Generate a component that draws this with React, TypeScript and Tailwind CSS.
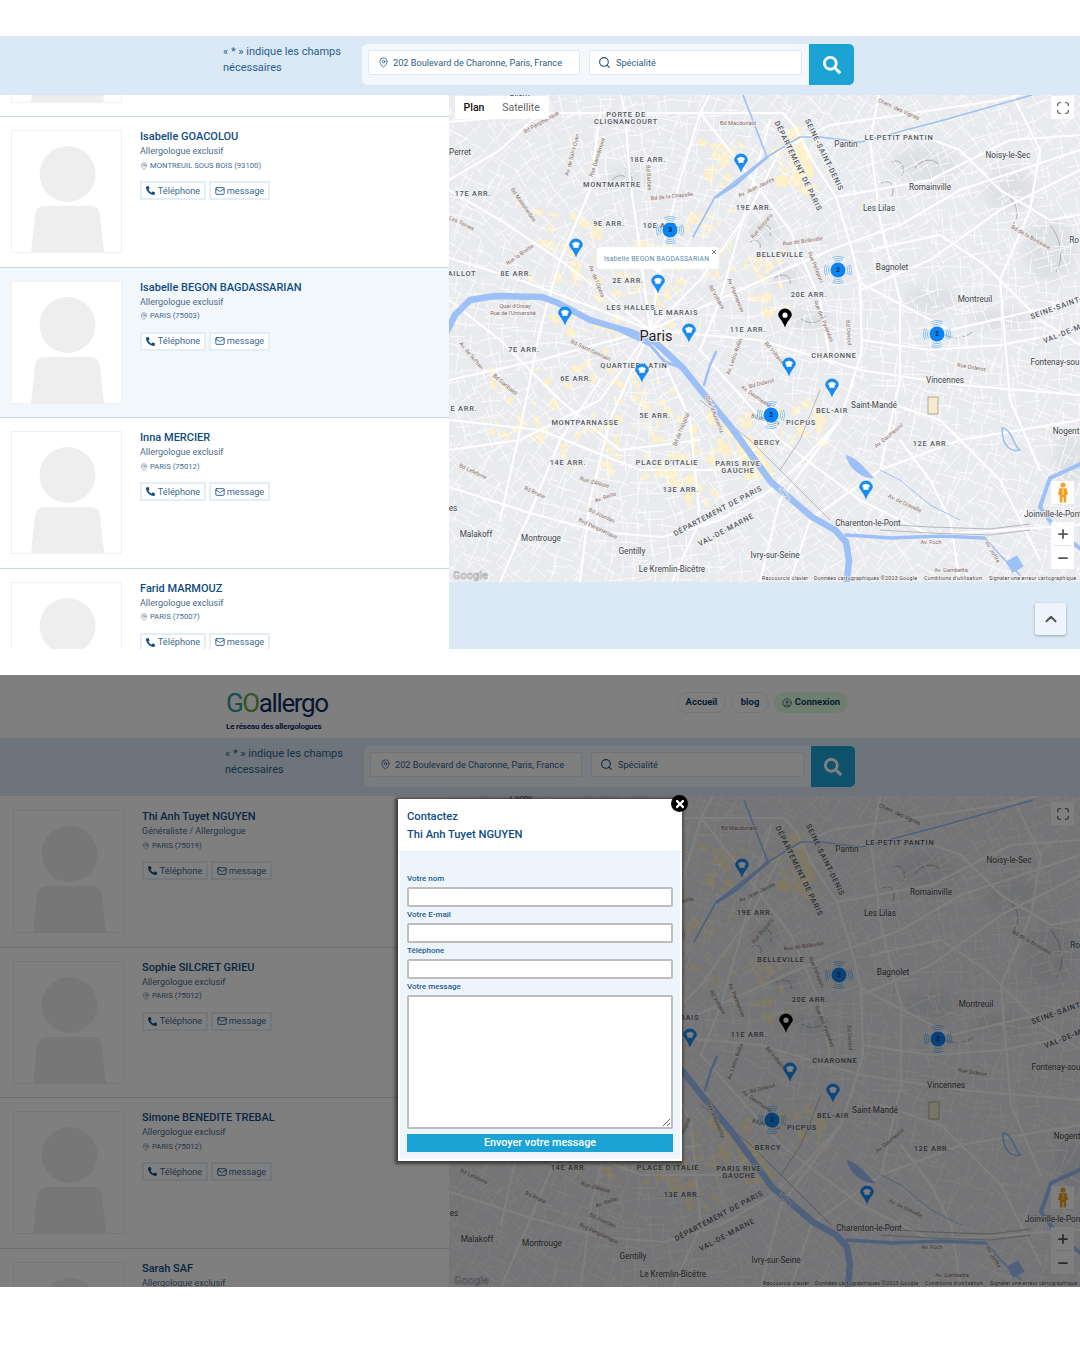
import { ChevronUp, Mail, MapPin, Maximize, Minus, Plus, Search, CircleUser } from "lucide-react";
import { FaPhoneAlt, FaSearch, FaTimes } from "react-icons/fa";

type Label = [string, number, number, number, "a" | "c" | "s" | "w"];

const labels: Label[] = [
  ["PORTE DE", 626, 117, 0, "a"],
  ["CLIGNANCOURT", 626, 124, 0, "a"],
  ["Bd Périphérique", 542, 124, -30, "s"],
  ["Bd Macdonald", 738, 125, 0, "s"],
  ["Chem. des Vignes", 898, 111, 24, "s"],
  ["LE PETIT PANTIN", 899, 140, 0, "a"],
  ["Pantin", 846, 147, 0, "c"],
  ["Noisy-le-Sec", 1008, 158, 0, "c"],
  ["Perret", 460, 155, 0, "c"],
  ["18E ARR.", 648, 162, 0, "a"],
  ["Av. de Saint-Ouen", 574, 155, -75, "s"],
  ["Rue Damrémont", 599, 158, -72, "s"],
  ["Bd Barbès", 647, 178, 86, "s"],
  ["MONTMARTRE", 612, 187, 0, "a"],
  ["17E ARR.", 473, 196, 0, "a"],
  ["Bd de la Chapelle", 672, 198, -6, "s"],
  ["Av. Jean Jaurès", 757, 189, -26, "s"],
  ["Romainville", 930, 190, 0, "c"],
  ["Les Lilas", 879, 211, 0, "c"],
  ["19E ARR.", 754, 210, 0, "a"],
  ["9E ARR.", 609, 226, 0, "a"],
  ["10E ARR.", 661, 228, 0, "a"],
  ["Bd Malesherbes", 522, 206, 55, "s"],
  ["Les Ternes", 461, 225, 25, "s"],
  ["Rue de Belleville", 803, 243, -8, "s"],
  ["Bd de la Boissière", 1030, 239, 30, "s"],
  ["Ro", 1074, 243, 0, "c"],
  ["Rue Botzaris", 763, 227, -50, "s"],
  ["BELLEVILLE", 780, 257, 0, "a"],
  ["Bagnolet", 892, 270, 0, "c"],
  ["AILLOT", 462, 276, 0, "a"],
  ["8E ARR.", 516, 276, 0, "a"],
  ["Rue la Boétie", 521, 256, -35, "s"],
  ["2E ARR.", 628, 283, 0, "a"],
  ["Rue Pelleport", 814, 268, 68, "s"],
  ["Av. de l'Opéra", 595, 282, 68, "s"],
  ["Bd Voltaire", 715, 298, 60, "s"],
  ["Av. Parmentier", 734, 296, 68, "s"],
  ["20E ARR.", 809, 297, 0, "a"],
  ["Montreuil", 975, 302, 0, "c"],
  ["SEINE-SAINT-", 1057, 310, -20, "a"],
  ["VAL-DE-M", 1063, 336, -22, "a"],
  ["LES HALLES", 631, 310, 0, "a"],
  ["LE MARAIS", 676, 315, 0, "a"],
  ["Quai d'Orsay", 515, 308, 0, "s"],
  ["Rue de l'Université", 513, 315, 0, "s"],
  ["11E ARR.", 748, 332, 0, "a"],
  ["Rue des Pyrénées", 822, 322, 68, "s"],
  ["Bd Davout", 847, 333, 86, "s"],
  ["7E ARR.", 524, 352, 0, "a"],
  ["Av. de Suffren", 470, 357, 50, "s"],
  ["Bd Saint-Germain", 590, 352, 25, "s"],
  ["CHARONNE", 834, 358, 0, "a"],
  ["Bd Voltaire", 773, 354, 50, "s"],
  ["Av. Ledru Rollin", 736, 357, -70, "s"],
  ["Fontenay-sou", 1055, 365, 0, "c"],
  ["Rue Diderot", 971, 369, 10, "s"],
  ["QUARTIER LATIN", 634, 368, 0, "a"],
  ["Vincennes", 945, 383, 0, "c"],
  ["6E ARR.", 576, 381, 0, "a"],
  ["Bd Garibaldi", 504, 386, 40, "s"],
  ["Bd Diderot", 762, 385, -15, "s"],
  ["Av. Daumesnil", 755, 398, 35, "s"],
  ["E ARR.", 464, 411, 0, "a"],
  ["BEL-AIR", 832, 413, 0, "a"],
  ["Saint-Mandé", 874, 408, 0, "c"],
  ["5E ARR.", 655, 418, 0, "a"],
  ["MONTPARNASSE", 585, 425, 0, "a"],
  ["PICPUS", 801, 425, 0, "a"],
  ["Bd de Bercy", 765, 421, 15, "s"],
  ["Quai d'Austerlitz", 713, 415, 68, "s"],
  ["Bd de l'Hôpital", 683, 430, -68, "s"],
  ["Av. Daumesnil", 890, 437, -40, "s"],
  ["12E ARR.", 931, 446, 0, "a"],
  ["Nogent", 1066, 434, 0, "c"],
  ["BERCY", 767, 445, 0, "a"],
  ["PLACE D'ITALIE", 667, 465, 0, "a"],
  ["PARIS RIVE", 738, 466, 0, "a"],
  ["GAUCHE", 738, 473, 0, "a"],
  ["14E ARR.", 568, 465, 0, "a"],
  ["Bd Lefebvre", 472, 473, 25, "s"],
  ["Rue d'Alésia", 594, 484, 15, "s"],
  ["13E ARR.", 681, 492, 0, "a"],
  ["Av. Reille", 606, 499, -20, "s"],
  ["Bd Brune", 534, 494, 25, "s"],
  ["Seine", 783, 495, 55, "w"],
  ["Bd Jourdan", 601, 517, 25, "s"],
  ["Av. de Gravelle", 904, 505, 25, "s"],
  ["DÉPARTEMENT DE PARIS", 719, 513, -28, "a"],
  ["VAL-DE-MARNE", 727, 532, -28, "a"],
  ["DÉPARTEMENT DE PARIS", 796, 167, 64, "a"],
  ["SEINE-SAINT-DENIS", 822, 156, 64, "a"],
  ["Joinville-le-Pont", 1053, 517, 0, "c"],
  ["Charenton-le-Pont", 868, 526, 0, "c"],
  ["es", 453, 511, 0, "c"],
  ["Malakoff", 476, 537, 0, "c"],
  ["Montrouge", 541, 541, 0, "c"],
  ["Bvd Périphérique", 597, 530, 25, "s"],
  ["Gentilly", 632, 554, 0, "c"],
  ["Av. Foch", 931, 544, 0, "s"],
  ["Ivry-sur-Seine", 775, 558, 0, "c"],
  ["Av. Joffre", 991, 553, 60, "s"],
  ["Le Kremlin-Bicêtre", 672, 572, 0, "c"],
  ["Av. Gambetta", 951, 572, 0, "s"],
  ["Clichy", 520, 96, 0, "c"],
];

const majorRoads = [
  "449,122 550,113 700,113 783,113 795,127 815,165 836,197 852,250 860,283 862,350 852,383 840,420 803,460 771,490 720,520 663,537 600,532 530,513 449,487",
  "650,330 640,250 630,180 625,113 620,90",
  "650,330 665,240 680,180 700,113 712,90",
  "650,330 700,280 750,210 780,150 830,125 900,115 1000,100 1040,90",
  "650,330 740,290 830,250 900,225 960,190 1080,150",
  "650,330 760,340 860,370 960,385 1080,395",
  "650,330 560,260 500,220 449,190",
  "650,330 540,360 449,380",
  "650,330 610,420 590,500 580,582",
  "650,330 690,420 700,520 672,582",
  "700,350 780,440 860,500 930,535 1080,525",
  "860,283 950,330 1080,300",
  "836,197 930,180 1010,140 1080,135",
  "860,290 930,260 1000,210 1060,180 1080,170",
  "449,258 520,280 600,310 650,330",
  "540,113 500,150 449,180",
  "1010,90 1040,150 1030,210 1000,280 1010,400 1040,470",
  "449,420 540,430 640,470 720,470 770,440",
  "790,582 810,520 880,470 960,440 1080,420",
  "500,582 530,513 560,440 600,380",
  "880,90 870,140 880,220 900,300 900,380 880,470",
  "700,113 745,170 790,230 820,300 830,360",
  "860,140 905,130 960,150 1000,190 1050,220 1080,215",
  "870,250 940,235 985,265 1040,320 1080,345",
  "862,340 930,350 1000,345 1080,330",
  "449,300 500,340 560,400 620,450 700,440",
  "449,450 520,440 600,400 650,330",
  "600,113 590,190 560,260 540,330 520,430 500,520",
  "770,120 740,230 720,300 700,350",
  "880,400 940,420 1000,480 1040,560",
  "900,440 930,480 950,520 960,582",
  "840,420 780,500 760,582",
];

const grayRoads = [
  "880,524 930,527 990,529 1030,524",
  "880,530 930,533 990,535 1030,530",
  "700,400 750,440 790,480 830,520",
  "820,390 800,440 780,470",
];

// hillshade scribbles on the slopes
const hillLines = [
  "M612 180C620 172 628 176 632 184",
  "M625 168C632 172 634 180 630 190",
  "M760 228C766 222 772 226 770 236",
  "M750 242C756 238 762 242 760 248",
  "M775 278C783 272 792 276 790 284",
  "M800 318C810 326 820 322 826 316",
  "M892 162C900 158 906 166 902 176",
  "M915 168C922 158 934 158 940 166",
  "M880 184C888 178 896 184 892 196",
  "M945 335C955 340 966 338 972 332",
  "M1010 198C1018 206 1020 216 1012 226",
  "M1050 225C1062 240 1064 258 1056 272",
];

const rng = (() => {
  let s = 20230611;
  return () => {
    s = (s + 0x6d2b79f5) | 0;
    let t = Math.imul(s ^ (s >>> 15), 1 | s);
    t = (t + Math.imul(t ^ (t >>> 7), 61 | t)) ^ t;
    return ((t ^ (t >>> 14)) >>> 0) / 4294967296;
  };
})();

// small streets, radial or ringed around the centre of Paris
const streets = (() => {
  let d = "";
  const seg = (x: number, y: number, a: number, l: number) =>
    `M${(x - Math.cos(a) * l).toFixed(1)} ${(y - Math.sin(a) * l).toFixed(1)}L${(x + Math.cos(a) * l).toFixed(1)} ${(y + Math.sin(a) * l).toFixed(1)}`;
  for (let x = 440; x < 1090; x += 15) {
    for (let y = 84; y < 590; y += 15) {
      const cx = x + rng() * 9;
      const cy = y + rng() * 9;
      const radial = Math.atan2(cy - 330, cx - 650);
      const a = radial + (rng() < 0.5 ? 0 : 1.57) + (rng() - 0.5) * 0.7;
      d += seg(cx, cy, a, 7 + rng() * 9);
      d += seg(cx + Math.cos(a) * 5, cy + Math.sin(a) * 5, a + 1.57 + (rng() - 0.5) * 0.3, 5 + rng() * 6);
    }
  }
  return d;
})();

// yellow commercial patches, thick around the centre
const patches = (() => {
  const out: { x: number; y: number; w: number; h: number; r: number }[] = [];
  const spots = [
    [600, 280, 50], [560, 240, 40], [650, 300, 40], [580, 350, 40], [650, 400, 35], [730, 440, 30], [700, 470, 30],
    [520, 400, 35], [720, 160, 22], [790, 165, 20], [700, 240, 35], [760, 280, 30], [800, 420, 22], [670, 450, 25], [590, 440, 30],
  ];
  for (const [sx, sy, sr] of spots) {
    for (let i = 0; i < 22; i++) {
      out.push({
        x: sx + (rng() - 0.5) * sr * 2,
        y: sy + (rng() - 0.5) * sr * 2,
        w: 3 + rng() * 9,
        h: 2 + rng() * 6,
        r: rng() * 90,
      });
    }
  }
  return out;
})();

const bluePins = [
  [741, 163], [576, 248], [658, 284], [565, 316], [689, 333], [642, 373], [789, 367], [832, 388], [866, 490],
];

const clusters: [number, number, number][] = [
  [670, 230, 3], [838, 270, 2], [937, 334, 2], [771, 415, 2],
];

function Pin({ x, y, color }: { x: number; y: number; color: string }) {
  return (
    <g transform={`translate(${x} ${y})`}>
      <path d="M0 9.5C-2 3 -6.8 -1 -6.8 -2.8A6.8 6.8 0 1 1 6.8 -2.8C6.8 -1 2 3 0 9.5Z" fill={color} />
      {color === "#000" ? (
        <circle cx="0" cy="-2.8" r="2.6" fill="#fff" />
      ) : (
        <path d="M-2.6 -0.2V-2.4C-4.6 -3.2 -3.6 -6 -1.6 -5.4C-1 -6.6 1 -6.6 1.6 -5.4C3.6 -6 4.6 -3.2 2.6 -2.4V-0.2Z" fill="#fff" />
      )}
    </g>
  );
}

function Cluster({ x, y, n }: { x: number; y: number; n: number }) {
  return (
    <g transform={`translate(${x} ${y})`}>
      {[9.5, 11.5, 13.5].map((r) => (
        <circle key={r} r={r} fill="none" stroke="#4aa3f5" strokeWidth="0.7" pathLength={100} strokeDasharray="14 11" strokeDashoffset="7" opacity="0.85" />
      ))}
      <circle r="7.5" fill="#0a84f5" />
      <text y="2.2" textAnchor="middle" fontSize="6.5" fontWeight="700" fill="#10233a">{n}</text>
    </g>
  );
}

function MapLabel({ l }: { l: Label }) {
  const [t, x, y, r, k] = l;
  const st = {
    a: { size: 7.4, fill: "#55595f", sp: 0.75, w: 500 },
    c: { size: 8.2, fill: "#3f4347", sp: 0, w: 400 },
    s: { size: 5.6, fill: "#86695c", sp: 0, w: 400 },
    w: { size: 6, fill: "#4a7fd0", sp: 0, w: 400 },
  }[k];
  return (
    <text
      x={x}
      y={y}
      textAnchor="middle"
      transform={r ? `rotate(${r} ${x} ${y})` : undefined}
      fontSize={st.size}
      fontWeight={st.w}
      letterSpacing={st.sp}
      fill={st.fill}
      stroke="#f2f3f5"
      strokeWidth="1.4"
      paintOrder="stroke"
    >
      {t}
    </text>
  );
}

function MapDrawing({ viewBox, width, height, tooltip }: { viewBox: string; width: number; height: number; tooltip?: boolean }) {
  return (
    <svg width={width} height={height} viewBox={viewBox} className="block font-['Roboto',sans-serif]">
      <defs>
        <filter id="soft" x="-30%" y="-30%" width="160%" height="160%">
          <feGaussianBlur stdDeviation="5" />
        </filter>
      </defs>
      <rect x="440" y="80" width="650" height="510" fill="#eaebee" />
      <g filter="url(#soft)" fill="#d8dade" opacity="0.6">
        <ellipse cx="625" cy="178" rx="20" ry="10" />
        <ellipse cx="765" cy="232" rx="16" ry="12" />
        <ellipse cx="785" cy="275" rx="15" ry="12" />
        <ellipse cx="810" cy="320" rx="20" ry="12" />
        <ellipse cx="925" cy="165" rx="34" ry="18" />
        <ellipse cx="1010" cy="190" rx="26" ry="22" />
        <ellipse cx="1050" cy="250" rx="26" ry="32" />
        <ellipse cx="930" cy="300" rx="26" ry="15" />
        <ellipse cx="1000" cy="320" rx="30" ry="10" />
        <ellipse cx="1070" cy="460" rx="16" ry="26" />
      </g>
      <g fill="#fcf1c8">
        {patches.map((p, i) => (
          <rect key={i} x={p.x} y={p.y} width={p.w} height={p.h} transform={`rotate(${p.r.toFixed(0)} ${p.x.toFixed(0)} ${p.y.toFixed(0)})`} />
        ))}
        <polygon points="786,130 800,126 815,175 795,190" />
        <polygon points="735,440 750,435 775,475 745,480" />
      </g>
      <path d={hillLines.join("")} stroke="#a3a6ab" strokeWidth="0.9" fill="none" />
      <path d={streets} stroke="#fdfdfe" strokeWidth="0.85" fill="none" />
      <g fill="none" stroke="#fff" strokeLinejoin="round" strokeLinecap="round">
        {majorRoads.map((p) => (
          <polyline key={p} points={p} strokeWidth="2.1" />
        ))}
      </g>
      <g fill="none" stroke="#aeb1b6" strokeWidth="0.9">
        {grayRoads.map((p) => (
          <polyline key={p} points={p} />
        ))}
      </g>
      {/* Seine, Marne, canals, lakes */}
      <g fill="none" stroke="#9dc0f6" strokeLinejoin="round" strokeLinecap="round">
        <polyline strokeWidth="6.5" points="445,335 455,315 470,300 495,296 542,297 558,303 590,320 631,332 655,342 683,368 703,393 731,427 771,482 812,517 835,530 846,542 849,560 846,590" />
        <polyline strokeWidth="3" points="622,332 650,345 665,362 683,368" />
        <polyline strokeWidth="3.5" points="846,535 892,538 940,536 984,538" />
        <polyline strokeWidth="4" points="1085,462 1050,478 1040,507 1058,532 1085,552" />
        <polyline strokeWidth="1.6" points="1032,95 944,120 860,142 820,137 800,137 767,157 715,197 693,237" />
        <polyline strokeWidth="3" points="767,157 735,185 716,197" />
        <polyline strokeWidth="1.6" points="743,95 767,157" />
        <polyline strokeWidth="2.5" points="704,385 710,365 716,352" />
        <polyline strokeWidth="1" points="880,470 900,480 930,505 960,520" />
        <path strokeWidth="1.6" d="M1002 428C1012 428 1014 448 1020 450 1012 452 1002 448 1002 428Z" />
        <polyline strokeWidth="1.6" points="985,538 1000,555 1020,575" />
      </g>
      <path d="M846 455C858 458 866 470 874 478 866 480 848 470 846 455Z" fill="#9dc0f6" />
      <rect x="1008" y="558" width="13" height="13" fill="#9dc0f6" transform="rotate(-30 1014 564)" />
      {/* chateau de Vincennes */}
      <rect x="928" y="397" width="10" height="17" fill="#f3ead0" stroke="#a99c7a" strokeWidth="0.8" />
      {labels.map((l, i) => (
        <MapLabel key={i} l={l} />
      ))}
      <text x="656" y="341" textAnchor="middle" fontSize="14.5" fill="#1f2124" stroke="#f2f3f5" strokeWidth="2" paintOrder="stroke">Paris</text>
      <text x="453" y="579" fontSize="11" fontWeight="500" fill="#d4d6da" stroke="#a0a2a6" strokeWidth="0.4">Google</text>
      <g fontSize="5.4" fill="#3c4043" stroke="#f5f6f7" strokeWidth="1" paintOrder="stroke">
        <text x="762" y="580" textLength="46">Raccourcis clavier</text>
        <text x="814" y="580" textLength="103">Données cartographiques ©2023 Google</text>
        <text x="924" y="580" textLength="58">Conditions d'utilisation</text>
        <text x="989" y="580" textLength="87">Signaler une erreur cartographique</text>
      </g>
      {bluePins.map(([x, y]) => (
        <Pin key={x} x={x} y={y} color="#1a8cf0" />
      ))}
      <Pin x={785} y={318} color="#000" />
      {clusters.map(([x, y, n]) => (
        <Cluster key={x} x={x} y={y} n={n} />
      ))}
      {tooltip && (
        <g>
          <path d="M601 247H715Q719 247 719 251V265Q719 269 715 269H663L658 273L653 269H601Q597 269 597 265V251Q597 247 601 247Z" fill="#fff" />
          <text x="604" y="260.5" fontSize="6.8" fill="#5b87ad" textLength="105">Isabelle BEGON BAGDASSARIAN</text>
          <path d="M712 250L716 254M716 250L712 254" stroke="#555" strokeWidth="0.8" />
        </g>
      )}
    </svg>
  );
}

function Pegman() {
  return (
    <svg width="12" height="21" viewBox="0 0 12 21">
      <circle cx="6" cy="3" r="2.6" fill="#f5a623" />
      <path d="M2.4 6.2H9.6L11 13H9.2V20.5H6.6V15H5.4V20.5H2.8V13H1Z" fill="#f0a020" />
      <path d="M5 7H7L6.8 13H5.2Z" fill="#f9cc6a" />
    </svg>
  );
}

function MapControls({ topClass }: { topClass: string }) {
  return (
    <>
      <div className={`absolute right-[6px] flex h-[23px] w-[23px] items-center justify-center bg-white ${topClass}`}>
        <Maximize size={14} strokeWidth={2} className="text-[#555]" />
      </div>
      <div className="absolute bottom-[78px] right-[6px] flex h-[23px] w-[23px] items-center justify-center bg-white">
        <Pegman />
      </div>
      <div className="absolute bottom-[13px] right-[6px] flex h-[47px] w-[23px] flex-col items-center bg-white">
        <div className="flex h-[23px] items-center justify-center">
          <Plus size={14} strokeWidth={3} className="text-[#555]" />
        </div>
        <div className="h-px w-[17px] bg-[#e6e6e6]" />
        <div className="flex h-[23px] items-center justify-center">
          <Minus size={14} strokeWidth={3} className="text-[#555]" />
        </div>
      </div>
    </>
  );
}

function Photo() {
  return (
    <div className="h-[123px] w-[111px] shrink-0 border border-[#f1f1f1] bg-white">
      <svg width="109" height="121" viewBox="0 0 109 121" className="block">
        <circle cx="55.5" cy="43" r="28" fill="#eeeeee" />
        <path d="M19 121L23 84Q24 75 33 75H78Q87 75 88 84L92 121Z" fill="#eeeeee" />
      </svg>
    </div>
  );
}

type Doc = { name: string; spec: string; loc: string };

function Row({ d, tinted, offset }: { d?: Doc; tinted?: boolean; offset?: boolean }) {
  return (
    <div className={`flex h-[150.5px] border-b-[1.5px] border-[#c8d8e8] pt-[13px] ${offset ? "pl-[13px]" : "pl-[11px]"} ${tinted ? "bg-[#f2f7fc]" : "bg-white"}`}>
      <Photo />
      {d && (
        <div className="-mt-[2px] ml-[18px]">
          <div className="text-[11px] font-medium leading-[17px] text-[#0f4c81]">{d.name}</div>
          <div className="text-[9px] leading-[13px] text-[#4c6b88]">{d.spec}</div>
          <div className="flex h-[15px] items-center gap-[2px] text-[7.7px] text-[#3f6a91]">
            <MapPin size={8} strokeWidth={1.6} className="text-[#4c6b88]" />
            <span>{d.loc}</span>
          </div>
          <div className="mt-[8px] flex gap-[3px]">
            <div className="flex h-[19px] w-[66px] items-center justify-center gap-[3px] border-2 border-[#e4eef6] bg-white text-[9.2px] text-[#3a6a90]">
              <FaPhoneAlt size={9} className="text-[#0f4c81]" />
              <span>Téléphone</span>
            </div>
            <div className="flex h-[19px] w-[61px] items-center justify-center gap-[2px] border-2 border-[#e4eef6] bg-white text-[9.2px] text-[#3a6a90]">
              <Mail size={10} className="text-[#0f4c81]" />
              <span>message</span>
            </div>
          </div>
        </div>
      )}
    </div>
  );
}

function SearchBand({ offset }: { offset?: boolean }) {
  return (
    <div className={`flex items-start bg-[#dbe9f6] pt-[8px] ${offset ? "h-[58px] pl-[225px]" : "h-[59px] pl-[223px]"}`}>
      <p className="w-[139px] text-[11px] leading-[16px] text-[#2a5f8f]">
        « * » indique les champs nécessaires
      </p>
      <div className={`flex h-[41px] rounded-[6px] bg-[#f3f8fd] ${offset ? "w-[491px]" : "w-[492px]"}`}>
        <div className="flex flex-1 items-start gap-[9px] pl-[6px] pr-[7px] pt-[6px]">
          <div className="flex h-[25px] w-[212px] items-center gap-[4px] whitespace-nowrap rounded-[2px] border border-[#dfe8f0] bg-white pl-[9px] text-[9.2px] text-[#2f5d85]">
            <MapPin size={11} strokeWidth={1.6} className="text-[#1f4f7a]" />
            <span>202 Boulevard de Charonne, Paris, France</span>
          </div>
          <div className="flex h-[25px] w-[213px] items-center gap-[5px] rounded-[2px] border border-[#dfe8f0] bg-white pl-[8px] text-[9.2px] text-[#2f5d85]">
            <Search size={13} strokeWidth={2} className="text-[#1f4f7a]" />
            <span>Spécialité</span>
          </div>
        </div>
        <div className="flex w-[46px] items-center justify-center rounded-r-[5px] bg-[#1ba3d6]">
          <FaSearch size={18} className="text-white" />
        </div>
      </div>
    </div>
  );
}

const topDocs: Doc[] = [
  { name: "Isabelle GOACOLOU", spec: "Allergologue exclusif", loc: "MONTREUIL SOUS BOIS (93100)" },
  { name: "Isabelle BEGON BAGDASSARIAN", spec: "Allergologue exclusif", loc: "PARIS (75003)" },
  { name: "Inna MERCIER", spec: "Allergologue exclusif", loc: "PARIS (75012)" },
  { name: "Farid MARMOUZ", spec: "Allergologue exclusif", loc: "PARIS (75007)" },
];

const bottomDocs: Doc[] = [
  { name: "Thi Anh Tuyet NGUYEN", spec: "Généraliste / Allergologue", loc: "PARIS (75019)" },
  { name: "Sophie SILCRET GRIEU", spec: "Allergologue exclusif", loc: "PARIS (75012)" },
  { name: "Simone BENEDITE TREBAL", spec: "Allergologue exclusif", loc: "PARIS (75012)" },
  { name: "Sarah SAF", spec: "Allergologue exclusif", loc: "PARIS (75012)" },
];

function Field({ label }: { label: string }) {
  return (
    <label className="block">
      <span className="block h-[16px] text-[8px] font-medium leading-[16px] text-[#1e5b8f]">{label}</span>
      <input className="block h-[20px] w-full rounded-[2px] border-2 border-[#bdbdbd] bg-white" />
    </label>
  );
}

export default function App() {
  return (
    <div className="h-[1350px] w-[1080px] overflow-hidden bg-white font-['Roboto',sans-serif]">
      <div className="h-[36px]" />
      <SearchBand />
      <div className="flex h-[554px]">
        <div className="w-[449px] overflow-hidden bg-white">
          <div className="-mt-[128.5px]">
            <Row />
            {topDocs.map((d, i) => (
              <Row key={d.name} d={d} tinted={i === 1} />
            ))}
          </div>
        </div>
        <div className="flex flex-1 flex-col bg-[#dbe9f6]">
          <div className="relative h-[487px] overflow-hidden">
            <MapDrawing viewBox="449 95 631 487" width={631} height={487} tooltip />
            <div className="absolute left-[6px] top-px flex h-[23px] bg-white text-[10.5px]">
              <div className="flex w-[38px] items-center justify-center font-medium text-[#111]">Plan</div>
              <div className="flex w-[56px] items-center justify-center text-[#666]">Satellite</div>
            </div>
            <MapControls topClass="top-px" />
          </div>
          <div className="flex flex-1 items-start justify-end pr-[14px] pt-[21px]">
            <div className="flex h-[32px] w-[31px] items-center justify-center rounded-[2px] bg-[#edf4fb] shadow-[0_1px_3px_rgba(0,0,0,0.3)]">
              <ChevronUp size={18} strokeWidth={2.5} className="text-[#555]" />
            </div>
          </div>
        </div>
      </div>

      <div className="h-[26px]" />

      <div className="relative h-[612px] overflow-hidden">
        <header className="flex h-[63px] bg-white pl-[226px]">
          <div className="w-[451px] pt-[13px]">
            <div className="text-[26px] leading-[30px] tracking-[-1.4px] text-[#0b2f5c]">
              <span className="text-[#2a9d9a]">G</span>
              <span className="text-[#6aa83a]">O</span>
              allergo
            </div>
            <div className="mt-[3px] text-[8px] font-bold leading-[12px] tracking-[-0.2px] text-[#0b2f5c]">Le réseau des allergologues</div>
          </div>
          <nav className="mt-[17px] flex h-[21px] gap-[5px] text-[9.5px] font-bold text-[#0b3a66]">
            <div className="flex w-[49px] items-center justify-center rounded-[10px] border border-[#ececec]">Accueil</div>
            <div className="flex w-[38px] items-center justify-center rounded-[10px] border border-[#ececec]">blog</div>
            <div className="flex w-[74px] items-center justify-center gap-[3px] rounded-[10px] bg-[#dcffe0]">
              <CircleUser size={10} strokeWidth={1.6} />
              <span>Connexion</span>
            </div>
          </nav>
        </header>
        <SearchBand offset />
        <div className="flex h-[491px]">
          <div className="w-[449px] overflow-hidden bg-white pt-px">
            {bottomDocs.map((d) => (
              <Row key={d.name} d={d} offset />
            ))}
          </div>
          <div className="relative flex-1 overflow-hidden">
            <MapDrawing viewBox="448 91 631 491" width={631} height={491} />
            <MapControls topClass="top-[6px]" />
          </div>
        </div>

        <div className="absolute inset-0 bg-black/50" />

        <div className="absolute left-[398px] top-[124px] h-[362px] w-[284px] border-2 border-white bg-[#edf4fb] shadow-[-1px_1px_3px_2px_rgba(0,0,0,0.5)]">
          <div className="-mx-[2px] -mt-[2px] h-[53px] border-b border-[#e6eef6] bg-white pl-[9px] pt-[9px] text-[11.2px] font-medium leading-[18px] text-[#0f4c81]">
            <div>Contactez</div>
            <div>Thi Anh Tuyet NGUYEN</div>
          </div>
          <div className="px-[7px] pt-[19px]">
            <Field label="Votre nom" />
            <Field label="Votre E-mail" />
            <Field label="Téléphone" />
            <label className="block">
              <span className="block h-[16px] text-[8px] font-medium leading-[16px] text-[#1e5b8f]">Votre message</span>
              <textarea className="block h-[134px] w-full rounded-[2px] border-2 border-[#bdbdbd] bg-white" />
            </label>
            <button className="mt-[5px] block h-[18px] w-full bg-[#1ba3d6] text-[10.8px] font-medium leading-[18px] text-white">Envoyer votre message</button>
          </div>
          <div className="absolute -right-[8px] -top-[6px] flex h-[17px] w-[17px] items-center justify-center rounded-full bg-black">
            <FaTimes size={12} className="text-white" />
          </div>
        </div>
      </div>
    </div>
  );
}
